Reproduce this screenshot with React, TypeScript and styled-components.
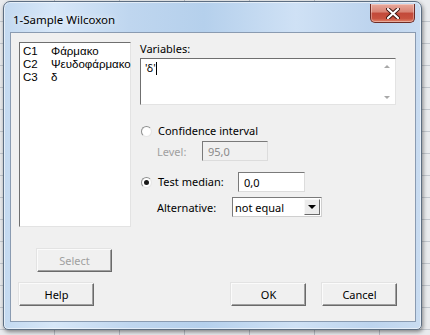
import React from 'react';
import styled, { createGlobalStyle } from 'styled-components';

const GlobalStyle = createGlobalStyle`
  html, body {
    margin: 0;
    padding: 0;
  }
  body {
    font-family: 'Noto Sans', 'Open Sans', sans-serif;
    font-size: 11px;
    color: #000;
  }
`;

const Desktop = styled.div`
  width: 430px;
  height: 335px;
  overflow: hidden;
  display: flex;
  align-items: flex-start;
  background-color: #e9ebee;
  background-image: repeating-linear-gradient(to right, transparent 0 54px, #b9bec6 54px 55px, transparent 55px 65px),
    repeating-linear-gradient(to bottom, transparent 0 21px, #c3c8cf 21px 22px);
`;

const Window = styled.div`
  margin: 1px 0 0 3px;
  width: 419px;
  height: 329px;
  box-sizing: border-box;
  border: 1px solid #5d6e82;
  border-radius: 7px 7px 5px 5px;
  padding: 0 5px 7px 6px;
  display: flex;
  flex-direction: column;
  background: linear-gradient(to right, #c3d9f0 0%, #d7e7f8 12%, #bfd6ef 30%, #b5d0ec 48%, #cfe1f5 70%, #bdd4ee 88%, #c9dcf1 100%);
  box-shadow: 1px 2px 4px rgba(0, 0, 0, 0.45), inset 0 0 0 1px rgba(255, 255, 255, 0.55);
`;

const TitleBar = styled.div`
  height: 30px;
  display: flex;
  align-items: flex-start;
  justify-content: space-between;
`;

const Title = styled.div`
  padding: 10px 0 0 3px;
  font-size: 11.5px;
  color: #000;
  text-shadow: 0 0 6px rgba(255, 255, 255, 0.9);
`;

const CloseButton = styled.div`
  margin-top: 2px;
  margin-right: 1px;
  width: 45px;
  height: 19px;
  box-sizing: border-box;
  border: 1px solid #6d2b25;
  border-top: none;
  border-radius: 0 0 5px 5px;
  background: linear-gradient(to bottom, #e9a99c 0%, #d88374 45%, #c2493a 50%, #c8523f 80%, #e1856b 100%);
  display: flex;
  align-items: center;
  justify-content: center;
  box-shadow: inset 0 0 0 1px rgba(255, 255, 255, 0.35);
`;

const Client = styled.div`
  flex: 1;
  box-sizing: border-box;
  border: 1px solid #8a9bb1;
  background: #f0f0f0;
  display: flex;
  flex-direction: column;
`;

const MainRow = styled.div`
  display: flex;
  padding: 9px 0 0 8px;
`;

const ListBox = styled.div`
  width: 112px;
  height: 185px;
  flex-shrink: 0;
  box-sizing: border-box;
  background: #fff;
  border-style: solid;
  border-width: 1px;
  border-color: #6f6f6f #e3e3e3 #e3e3e3 #6f6f6f;
  padding: 2px 0 0 3px;
`;

const ListItem = styled.div`
  display: flex;
  height: 13px;
  line-height: 13px;
  white-space: nowrap;
  font-family: 'Liberation Sans', Arial, sans-serif;
  font-size: 11.5px;
`;

const ColId = styled.span`
  width: 28px;
  flex-shrink: 0;
`;

const RightColumn = styled.div`
  margin-left: 9px;
  display: flex;
  flex-direction: column;
`;

const FieldLabel = styled.div`
  height: 14px;
  line-height: 14px;
`;

const TextArea = styled.div`
  margin-top: 2px;
  width: 256px;
  height: 47px;
  box-sizing: border-box;
  background: #fff;
  border-style: solid;
  border-width: 1px;
  border-color: #6f6f6f #e3e3e3 #e3e3e3 #6f6f6f;
  display: flex;
`;

const TextContent = styled.div`
  flex: 1;
  padding: 2px 0 0 4px;
  line-height: 14px;
  display: flex;
  align-items: flex-start;
`;

const Caret = styled.span`
  display: inline-block;
  width: 1px;
  height: 13px;
  margin-top: 1px;
  background: #000;
`;

const ScrollBar = styled.div`
  width: 17px;
  display: flex;
  flex-direction: column;
  justify-content: space-between;
  align-items: center;
  padding: 6px 0 5px;
`;

const ArrowUp = styled.span`
  width: 0;
  height: 0;
  border-left: 3px solid transparent;
  border-right: 3px solid transparent;
  border-bottom: 3px solid #a8a8a8;
`;

const ArrowDown = styled.span`
  width: 0;
  height: 0;
  border-left: 3px solid transparent;
  border-right: 3px solid transparent;
  border-top: 3px solid #a8a8a8;
`;

const RadioRow = styled.div<{ gap: number }>`
  margin-top: ${(p) => p.gap}px;
  display: flex;
  align-items: center;
  padding-left: 1px;
  white-space: nowrap;
`;

const Radio = styled.span<{ checked?: boolean }>`
  width: 11px;
  height: 11px;
  flex-shrink: 0;
  box-sizing: border-box;
  border-radius: 50%;
  border: 1px solid #8e8f8f;
  border-right-color: #e6e6e6;
  border-bottom-color: #e6e6e6;
  background: radial-gradient(circle, #fff 55%, #f4f4f4 100%);
  display: flex;
  align-items: center;
  justify-content: center;
  margin-right: 6px;

  &::after {
    content: '';
    width: 5px;
    height: 5px;
    border-radius: 50%;
    background: ${(p) => (p.checked ? '#1a1a1a' : 'transparent')};
  }
`;

const RadioText = styled.span<{ width?: number }>`
  ${(p) => (p.width ? `width: ${p.width}px;` : '')}
  line-height: 16px;
`;

const SubRow = styled.div<{ gap: number }>`
  margin-top: ${(p) => p.gap}px;
  display: flex;
  align-items: center;
  padding-left: 17px;
`;

const SubLabel = styled.span<{ width: number; disabled?: boolean }>`
  width: ${(p) => p.width}px;
  color: ${(p) => (p.disabled ? '#a0a0a0' : '#000')};
`;

const Input = styled.div<{ width: number; height: number; disabled?: boolean }>`
  width: ${(p) => p.width}px;
  height: ${(p) => p.height}px;
  box-sizing: border-box;
  border-style: solid;
  border-width: 1px;
  border-color: #7a7a7a #dcdcdc #dcdcdc #7a7a7a;
  background: ${(p) => (p.disabled ? '#f0f0f0' : '#fff')};
  color: ${(p) => (p.disabled ? '#8a8a8a' : '#000')};
  padding-left: 5px;
  display: flex;
  align-items: center;
`;

const SelectBox = styled.div`
  width: 90px;
  height: 20px;
  box-sizing: border-box;
  border: 1px solid #828790;
  border-color: #7a7a7a #cfcfcf #cfcfcf #7a7a7a;
  background: #fff;
  display: flex;
  align-items: center;
  padding-left: 2px;
`;

const SelectValue = styled.span`
  flex: 1;
`;

const DropButton = styled.span`
  width: 16px;
  height: 16px;
  margin-right: 1px;
  box-sizing: border-box;
  border: 1px solid #8c8c8c;
  border-color: #f8f8f8 #6a6a6a #6a6a6a #f8f8f8;
  background: #ececec;
  display: flex;
  align-items: center;
  justify-content: center;

  &::after {
    content: '';
    border-left: 4px solid transparent;
    border-right: 4px solid transparent;
    border-top: 4px solid #000;
  }
`;

const Button = styled.div<{ disabled?: boolean; width?: number }>`
  width: ${(p) => p.width ?? 75}px;
  height: 23px;
  box-sizing: border-box;
  border-style: solid;
  border-width: 1px;
  border-color: #fbfbfb #6a6a6a #6a6a6a #fbfbfb;
  box-shadow: inset -1px -1px 0 #a0a0a0, -1px -1px 0 #e3e3e3;
  background: #f0f0f0;
  color: ${(p) => (p.disabled ? '#a0a0a0' : '#000')};
  display: flex;
  align-items: center;
  justify-content: center;
`;

const SelectRow = styled.div`
  margin-top: 22px;
  padding-left: 26px;
  display: flex;
`;

const ButtonRow = styled.div`
  margin-top: 11px;
  padding: 0 18px 0 8px;
  display: flex;
  gap: 16px;
`;

const Spacer = styled.div`
  flex: 1;
`;

const CloseGlyph = () => (
  <svg width="14" height="11" viewBox="0 0 14 11">
    <path d="M2 1 L12 10 M12 1 L2 10" stroke="#3a1410" strokeWidth="4" strokeLinecap="round" />
    <path d="M2 1 L12 10 M12 1 L2 10" stroke="#fff" strokeWidth="2.2" strokeLinecap="round" />
  </svg>
);

const columns = [
  { id: 'C1', name: 'Φάρμακο' },
  { id: 'C2', name: 'Ψευδοφάρμακο' },
  { id: 'C3', name: 'δ' },
];

export default function App() {
  return (
    <Desktop>
      <GlobalStyle />
      <Window>
        <TitleBar>
          <Title>1-Sample Wilcoxon</Title>
          <CloseButton>
            <CloseGlyph />
          </CloseButton>
        </TitleBar>
        <Client>
          <MainRow>
            <ListBox>
              {columns.map((c) => (
                <ListItem key={c.id}>
                  <ColId>{c.id}</ColId>
                  <span>{c.name}</span>
                </ListItem>
              ))}
            </ListBox>
            <RightColumn>
              <FieldLabel>Variables:</FieldLabel>
              <TextArea>
                <TextContent>
                  'δ'
                  <Caret />
                </TextContent>
                <ScrollBar>
                  <ArrowUp />
                  <ArrowDown />
                </ScrollBar>
              </TextArea>
              <RadioRow gap={18}>
                <Radio />
                <RadioText>Confidence interval</RadioText>
              </RadioRow>
              <SubRow gap={2}>
                <SubLabel width={45} disabled>
                  Level:
                </SubLabel>
                <Input width={66} height={20} disabled>
                  95,0
                </Input>
              </SubRow>
              <RadioRow gap={11}>
                <Radio checked />
                <RadioText width={80}>Test median:</RadioText>
                <Input width={67} height={20}>
                  0,0
                </Input>
              </RadioRow>
              <SubRow gap={5}>
                <SubLabel width={75}>Alternative:</SubLabel>
                <SelectBox>
                  <SelectValue>not equal</SelectValue>
                  <DropButton />
                </SelectBox>
              </SubRow>
            </RightColumn>
          </MainRow>
          <SelectRow>
            <Button disabled>Select</Button>
          </SelectRow>
          <ButtonRow>
            <Button>Help</Button>
            <Spacer />
            <Button>OK</Button>
            <Button>Cancel</Button>
          </ButtonRow>
        </Client>
      </Window>
    </Desktop>
  );
}
